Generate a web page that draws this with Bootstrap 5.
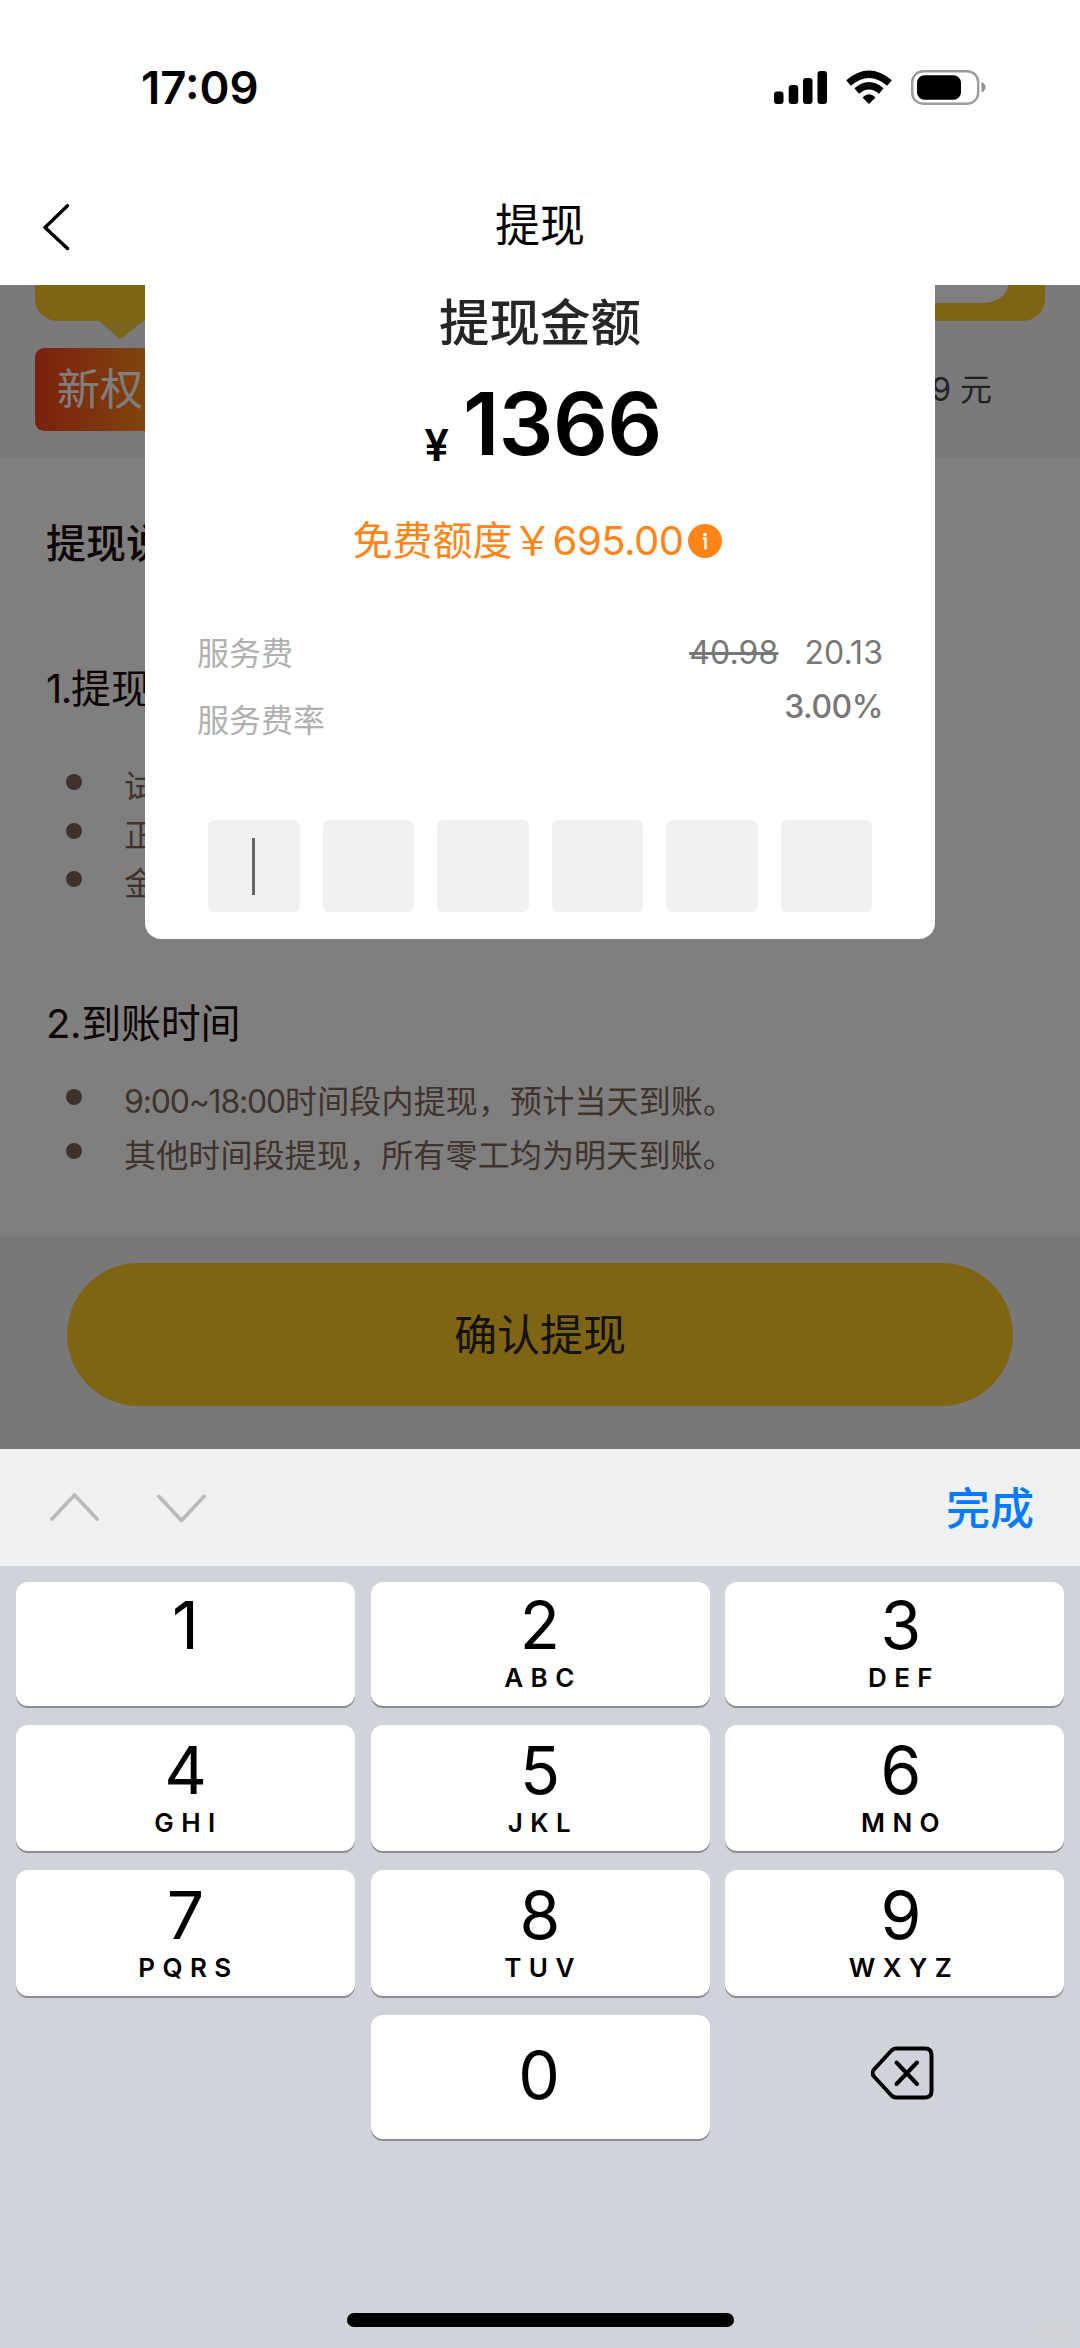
<!DOCTYPE html>
<html lang="zh-CN">
<head>
<meta charset="utf-8">
<meta name="viewport" content="width=device-width, initial-scale=1">
<title>提现</title>
<link href="https://cdn.jsdelivr.net/npm/bootstrap@5.3.0/dist/css/bootstrap.min.css" rel="stylesheet">
<style>
body{font-family:Inter,"Noto Sans CJK SC",sans-serif;color:#000;background:#fff;line-height:1}
.screen{width:1080px;height:2348px;overflow:hidden}
svg{display:block;flex:none}
/* status bar and title */
.statusbar{height:175px;padding:0 94px 0 141px}
.clock{font-size:45.5px;font-weight:600;letter-spacing:0}
.titlebar{height:110px;padding:0 43px}
.titlebar .side{width:40px}
.page-title{font-size:45px;line-height:60px;padding-bottom:8px}
/* page under the mask */
.stage{height:1164px;background:#fff}
.promo{height:173px;background:#f4f4f8;padding:0 35px}
.promo-card{height:36px;background:#fec926;border-radius:0 0 22px 22px;padding-right:37px}
.promo-inner{width:700px;height:18px;background:#fff;border-radius:0 0 27px 0/0 0 18px 0}
.promo-arrow{margin-left:64px}
.promo-line{height:83px;margin-top:9px;padding-right:53px}
.promo-tag{width:320px;height:83px;border-radius:9px;background:linear-gradient(90deg,#f84118,#ff9a20 42%);color:#fff;font-size:43px;font-weight:400;line-height:83px;padding-left:22px}
.promo-sum{font-size:32px;font-weight:400;color:#444}
.sec-h{font-size:40px;line-height:60px;color:#1c0808;padding-left:46px;margin:0}
.sec-h.first-h{margin-top:56px;font-weight:500}
.sec-h.rule-h{margin-top:85px}
.sec-h.time-h{margin-top:85px;letter-spacing:-.3px}
.num-tight{letter-spacing:-1.4px}
.notes{list-style:none;margin:0;padding:0 0 0 66px;color:#7e6658;font-size:32px;font-weight:400}
.notes li{display:flex;align-items:center}
.notes li::before{content:"";width:16px;height:16px;border-radius:50%;background:#7e6458;margin:-10px 42px 0 0}
.notes-a{margin-top:44px}
.notes-b{margin-top:21px;letter-spacing:.15px}
.notes-a li{height:48.5px}
.notes-b li{height:54px}
.hours{letter-spacing:-1.2px}
.footer-bar{height:212px;background:#f0f0f0;padding:26px 67px 0}
.btn-confirm{height:143px;border-radius:72px;background:#fec926;color:#262626;font-size:43px;line-height:1;padding-top:2px}
.mask{inset:0;background:rgba(0,0,0,.5)}
/* payment dialog */
.dialog{top:0;left:145px;width:790px;height:654px;background:#fff;border-radius:0 0 16px 16px;padding:2px 52px 0}
.dlg-title{font-size:50.5px;font-weight:500;line-height:71px;color:#262626}
.amount{height:108px;margin-top:23px;font-weight:600;padding-left:6px}
.amount .yen{font-size:44px;line-height:1;margin-right:14px;transform:translateY(6px)}
.amount .num{font-size:86px;line-height:1;letter-spacing:-.6px}
.quota{height:60px;margin-top:22px;font-size:40px;color:#ff8519;font-weight:400;padding-right:5px}
.quota .sum{letter-spacing:-.5px}
.quota svg{margin-left:5px}
.fees{margin-top:49px;font-size:32px;color:#777}
.fees .names{color:#b0b0b0;line-height:67px}
.fees .vals{padding:6px 0 0;line-height:53.5px}
.fee-now{letter-spacing:.1px}
.fee-rate{letter-spacing:-.5px;font-weight:500}
.fees s{margin-right:26px;text-decoration-thickness:3px}
.pins{margin:66px 11px 0}
.pin{width:91.5px;height:92px;border-radius:6px;background:#f1f1f1}
.caret{width:3px;height:57px;background:#666}
/* keyboard */
.kb-tools{height:117px;background:#eff0f2;padding:0 46px 0 50px}
.kb-done{font-size:44px;font-weight:500;color:#007aff;padding-top:2px}
.keys{height:782px;background:#d0d3da;padding:16px 16px 0;display:flex;flex-direction:column}
.krow{display:grid;grid-template-columns:repeat(3,339px);column-gap:15.5px;margin-bottom:19px;height:126px}
.krow.edge{height:124px}
.key{background:#fff;border-radius:12px;box-shadow:0 2px 0 #898b8f;padding-top:21px}
.key:nth-child(3){padding-left:13px}
.edge .key{padding-top:19px}
.edge .key.zero{padding:0 2px 5px 0}
.key b{font-size:66px;font-weight:400;line-height:48px}
.key i{font-style:normal;font-size:26px;font-weight:600;line-height:20px;letter-spacing:7.4px;margin-top:19px;padding-left:6px}
.home{width:387px;height:14px;border-radius:7px;background:#000;margin-top:auto;margin-bottom:21px}
.ghost{width:37px;height:19px;border-radius:10px;background:#d3d4d7;right:8px;bottom:7px}
</style>
<script src="https://cdn.jsdelivr.net/npm/bootstrap@5.3.0/dist/js/bootstrap.bundle.min.js"></script>
</head>
<body>
<div class="screen d-flex flex-column position-relative">
  <div class="statusbar d-flex align-items-center justify-content-between">
    <span class="clock">17:09</span>
    <svg width="212" height="36" viewBox="774 70 212 36">
      <rect x="774" y="91.500" width="9.500" height="12.500" rx="3"/><rect x="788.700" y="85" width="9.500" height="19" rx="3"/><rect x="803" y="78" width="9.500" height="26" rx="3"/><rect x="817.500" y="71" width="9.500" height="33" rx="3"/>
      <g fill="none" stroke="#000" stroke-width="7"><path d="M848.500 83Q869 65.500 889.500 83"/><path d="M856.700 91Q869 80.500 881.300 91"/></g>
      <path d="M862.500 97.500Q869 91 875.500 97.500L869 104z"/>
      <rect x="912.200" y="71.200" width="66" height="32.500" rx="11" fill="none" stroke="#9b9b9b" stroke-width="2.400"/>
      <rect x="917" y="75.200" width="44" height="24.500" rx="7.500"/>
      <path d="M981.500 82Q985.500 84 985.500 87.200T981.500 92.500z" fill="#8e8e8e"/>
    </svg>
  </div>
  <header class="titlebar d-flex align-items-center justify-content-between">
    <div class="side pb-1"><svg width="28" height="48" viewBox="0 0 28 48"><path d="M24.500 1.700L2 23.500L24.500 44.500" fill="none" stroke="#000" stroke-width="3.400" stroke-linecap="round" stroke-linejoin="round"/></svg></div>
    <div class="page-title">提现</div>
    <div class="side"></div>
  </header>

  <main class="stage position-relative d-flex flex-column">
    <section class="promo">
      <div class="promo-card d-flex justify-content-end"><div class="promo-inner"></div></div>
      <svg class="promo-arrow" width="44" height="18" viewBox="0 0 44 18"><path d="M0 0H44L24.500 16Q21.500 19 18.500 16Z" fill="#f2cb38"/></svg>
      <div class="promo-line d-flex align-items-center justify-content-between">
        <div class="promo-tag">新权</div>
        <div class="promo-sum">9 元</div>
      </div>
    </section>
    <h2 class="sec-h first-h">提现说</h2>
    <h3 class="sec-h rule-h fw-normal"><span class="num-tight">1.</span>提现</h3>
    <ul class="notes notes-a"><li>试</li><li>正</li><li>金</li></ul>
    <h3 class="sec-h time-h fw-normal">2.到账时间</h3>
    <ul class="notes notes-b"><li><span><span class="hours">9:00~18:00</span>时间段内提现，预计当天到账。</span></li><li>其他时间段提现，所有零工均为明天到账。</li></ul>
    <div class="footer-bar mt-auto"><div class="btn-confirm d-flex align-items-center justify-content-center">确认提现</div></div>
    <div class="mask position-absolute"></div>

    <section class="dialog position-absolute">
      <div class="dlg-title text-center">提现金额</div>
      <div class="amount d-flex align-items-baseline justify-content-center"><span class="yen">¥</span><span class="num">1366</span></div>
      <div class="quota d-flex align-items-center justify-content-center"><span>免费额度￥<span class="sum">695.00</span></span>
        <svg width="34" height="34" viewBox="0 0 34 34"><circle cx="17" cy="17" r="17" fill="#ff8519"/><circle cx="17" cy="10.500" r="1.800" fill="#fff"/><path d="M15 14.500H17.500V25.500" fill="none" stroke="#fff" stroke-width="2.400"/></svg>
      </div>
      <div class="fees d-flex justify-content-between">
        <div class="names"><div>服务费</div><div>服务费率</div></div>
        <div class="vals text-end"><div class="fee-now"><s>40.98</s>20.13</div><div class="fee-rate">3.00%</div></div>
      </div>
      <div class="pins d-flex justify-content-between">
        <div class="pin d-flex align-items-center justify-content-center"><span class="caret"></span></div>
        <div class="pin"></div><div class="pin"></div><div class="pin"></div><div class="pin"></div><div class="pin"></div>
      </div>
    </section>
  </main>

  <div class="kb-tools d-flex align-items-center justify-content-between">
    <svg width="158" height="32" viewBox="0 0 158 32"><path d="M2 27L24.500 3L47 27M109 4.500L131.500 28.500L154 4.500" fill="none" stroke="#b9babc" stroke-width="3.800" stroke-linecap="round" stroke-linejoin="round"/></svg>
    <span class="kb-done">完成</span>
  </div>
  <div class="keys">
    <div class="krow edge">
      <div class="key d-flex flex-column align-items-center"><b>1</b></div>
      <div class="key d-flex flex-column align-items-center"><b>2</b><i>ABC</i></div>
      <div class="key d-flex flex-column align-items-center"><b>3</b><i>DEF</i></div>
    </div>
    <div class="krow">
      <div class="key d-flex flex-column align-items-center"><b>4</b><i>GHI</i></div>
      <div class="key d-flex flex-column align-items-center"><b>5</b><i>JKL</i></div>
      <div class="key d-flex flex-column align-items-center"><b>6</b><i>MNO</i></div>
    </div>
    <div class="krow">
      <div class="key d-flex flex-column align-items-center"><b>7</b><i>PQRS</i></div>
      <div class="key d-flex flex-column align-items-center"><b>8</b><i>TUV</i></div>
      <div class="key d-flex flex-column align-items-center"><b>9</b><i>WXYZ</i></div>
    </div>
    <div class="krow edge">
      <div></div>
      <div class="key zero d-flex flex-column align-items-center justify-content-center"><b>0</b></div>
      <div class="d-flex align-items-center justify-content-center ps-3 pb-2">
        <svg width="64" height="56" viewBox="0 0 64 56"><g fill="none" stroke="#000" stroke-width="4" stroke-linecap="round" stroke-linejoin="round"><path d="M25 3.500H54Q60.500 3.500 60.500 10V46Q60.500 52.500 54 52.500H25Q22.500 52.500 20.500 50.500L3 31.500Q0 28 3 24.500L20.500 5.500Q22.500 3.500 25 3.500Z"/><path d="M25.500 17.500L46 39M46 17.500L25.500 39"/></g></svg>
      </div>
    </div>
    <div class="home mx-auto"></div>
  </div>
  <div class="ghost position-absolute"></div>
</div>
</body>
</html>
